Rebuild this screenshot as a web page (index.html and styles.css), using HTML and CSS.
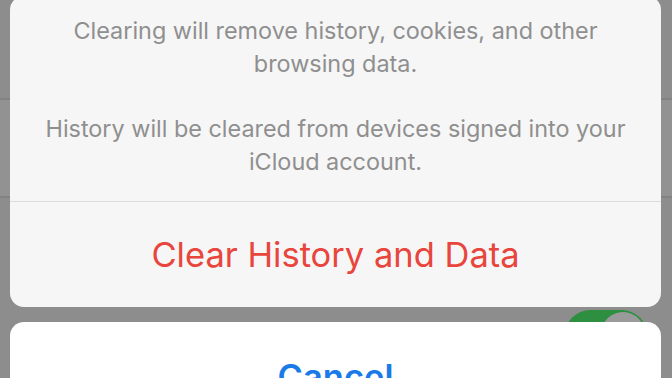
FILE: index.html
```html
<!DOCTYPE html>
<html lang="en">
<head>
    <meta charset="UTF-8">
    <meta name="viewport" content="width=device-width, initial-scale=1.0">
    <title>Clear History and Data</title>
    <link rel="stylesheet" href="styles.css">
</head>
<body>
    <!-- Dimmed settings list behind the sheet -->
    <div class="settings">
        <div class="settings-row row-tall"></div>
        <div class="settings-row row-mid"></div>
        <div class="settings-row row-toggle">
            <span class="toggle"><span class="toggle-knob"></span></span>
        </div>
    </div>

    <div class="sheet">
        <div class="sheet-group">
            <div class="sheet-message">
                <p>Clearing will remove history, cookies, and other browsing data.</p>
                <p>History will be cleared from devices signed into your iCloud account.</p>
            </div>
            <button class="sheet-action destructive">Clear History and Data</button>
        </div>
        <div class="sheet-group cancel-group">
            <button class="sheet-action cancel">Cancel</button>
        </div>
    </div>
</body>
</html>
```

FILE: styles.css
```css
* {
    margin: 0;
    padding: 0;
    box-sizing: border-box;
}

body {
    font-family: Inter, "Open Sans", sans-serif;
    background: #8e8e8e;
    width: 672px;
    height: 378px;
    overflow: hidden;
    position: relative;
}

/* Background list */
.settings {
    display: flex;
    flex-direction: column;
}

.settings-row {
    background: #8d8d8d;
    border-bottom: 2px solid #828282;
}

.row-tall {
    height: 100px;
}

.row-mid {
    height: 98px;
    background: #929292;
}

.row-toggle {
    height: 180px;
    border-bottom: none;
    display: flex;
    justify-content: flex-end;
    padding: 112px 25px 0 0;
}

.toggle {
    display: block;
    width: 82px;
    height: 50px;
    border-radius: 25px;
    background: #2f8f40;
    position: relative;
}

.toggle-knob {
    position: absolute;
    top: 2px;
    right: 2px;
    width: 44px;
    height: 44px;
    border-radius: 50%;
    background: #9a9a9a;
}

/* Action sheet */
.sheet {
    position: absolute;
    top: -4px;
    left: 10px;
    right: 11px;
    display: flex;
    flex-direction: column;
    gap: 15px;
}

.sheet-group {
    background: #f6f6f6;
    border-radius: 14px;
    overflow: hidden;
    display: flex;
    flex-direction: column;
}

.sheet-message {
    padding: 18px 26px 23px;
    text-align: center;
    color: #8f8f8f;
    font-size: 23.4px;
    line-height: 33px;
    border-bottom: 1px solid #dcdcdc;
}

.sheet-message p + p {
    margin-top: 32px;
}

.sheet-action {
    border: none;
    background: none;
    font-family: inherit;
    font-size: 34.5px;
    height: 105px;
    text-align: center;
}

.destructive {
    color: #e8453c;
}

.cancel-group {
    background: #fff;
}

.cancel {
    color: #1a7be8;
    font-weight: 600;
    padding-top: 4px;
}
```
